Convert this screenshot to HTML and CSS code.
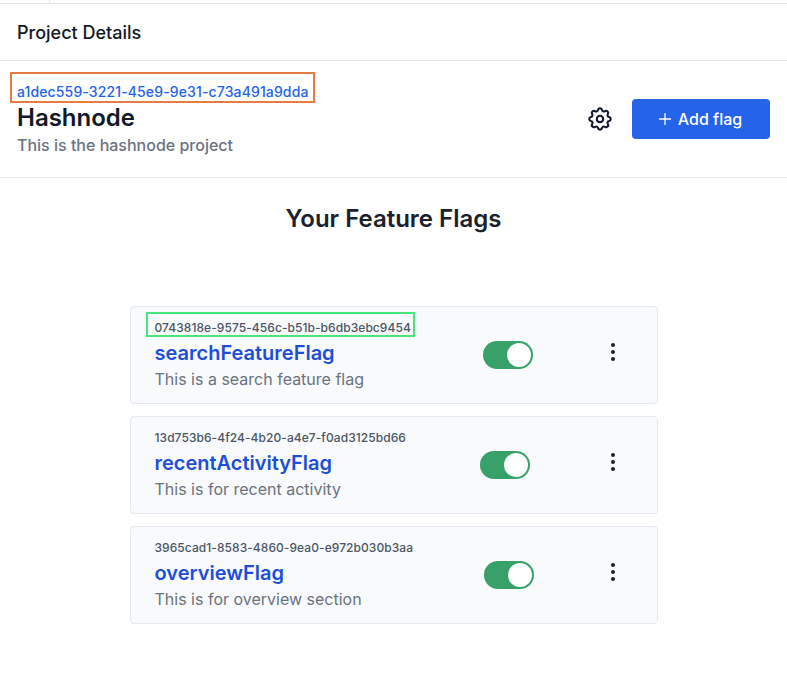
FILE: index.html
```html
<!DOCTYPE html>
<html lang="en">
<head>
<meta charset="utf-8">
<title>Project Details</title>
<link rel="stylesheet" href="styles.css">
</head>
<body>
<div class="topbar"><div class="topbar-cell"></div></div>
<header class="page-head">Project Details</header>
<section class="project">
  <div class="project-info">
    <div class="project-id">a1dec559-3221-45e9-9e31-c73a491a9dda</div>
    <h1 class="project-name">Hashnode</h1>
    <p class="project-desc">This is the hashnode project</p>
  </div>
  <div class="actions">
    <svg class="gear" viewBox="-12 -12 24 24" fill="none" stroke="currentColor" stroke-width="2.1" stroke-linejoin="round"><path d="M-2.01-9.08A2.05 2.05 0 0 1 2.01-9.08A1.9 1.9 0 0 0 5-7.84A2.05 2.05 0 0 1 7.84-5A1.9 1.9 0 0 0 9.08-2.01A2.05 2.05 0 0 1 9.08 2.01A1.9 1.9 0 0 0 7.84 5A2.05 2.05 0 0 1 5 7.84A1.9 1.9 0 0 0 2.01 9.08A2.05 2.05 0 0 1-2.01 9.08A1.9 1.9 0 0 0-5 7.84A2.05 2.05 0 0 1-7.84 5A1.9 1.9 0 0 0-9.08 2.01A2.05 2.05 0 0 1-9.08-2.01A1.9 1.9 0 0 0-7.84-5A2.05 2.05 0 0 1-5-7.84A1.9 1.9 0 0 0-2.01-9.08Z"/><circle r="3.2"/></svg>
    <button class="add"><svg class="plus" viewBox="0 0 12 12" stroke="currentColor" stroke-width="1.3"><path d="M6 0v12M0 6h12"/></svg>Add flag</button>
  </div>
</section>
<main class="flags">
  <h2 class="flags-title">Your Feature Flags</h2>
  <article class="card">
    <div class="card-text">
      <div class="flag-id highlighted">0743818e-9575-456c-b51b-b6db3ebc9454</div>
      <h3 class="flag-name">searchFeatureFlag</h3>
      <p class="flag-desc">This is a search feature flag</p>
    </div>
    <div class="toggle"><div class="knob"></div></div>
    <div class="menu"><i></i><i></i><i></i></div>
  </article>
  <article class="card">
    <div class="card-text">
      <div class="flag-id">13d753b6-4f24-4b20-a4e7-f0ad3125bd66</div>
      <h3 class="flag-name">recentActivityFlag</h3>
      <p class="flag-desc">This is for recent activity</p>
    </div>
    <div class="toggle"><div class="knob"></div></div>
    <div class="menu"><i></i><i></i><i></i></div>
  </article>
  <article class="card">
    <div class="card-text">
      <div class="flag-id">3965cad1-8583-4860-9ea0-e972b030b3aa</div>
      <h3 class="flag-name">overviewFlag</h3>
      <p class="flag-desc">This is for overview section</p>
    </div>
    <div class="toggle"><div class="knob"></div></div>
    <div class="menu"><i></i><i></i><i></i></div>
  </article>
</main>
</body>
</html>
```
FILE: styles.css
```css
* { box-sizing: border-box; }
body { margin: 0; background: #fff; color: #111827; font-family: Inter, "Liberation Sans", sans-serif; font-size: 16px; line-height: 24px; }
h1, h2, h3, p { margin: 0; }
.topbar { height: 4px; border-bottom: 1px solid #e5e7eb; }
.topbar-cell { width: 50px; height: 3px; border-right: 1px solid #e5e7eb; }
.page-head { height: 57px; padding: 15px 17px; border-bottom: 1px solid #e5e7eb; font-size: 18px; line-height: 28px; font-weight: 500; }
.project { height: 117px; padding: 0 17px; border-bottom: 1px solid #e5e7eb; display: flex; justify-content: space-between; align-items: center; }
.project-info { padding-top: 1px; }
.project-id { position: relative; width: max-content; font-size: 14px; line-height: 20px; letter-spacing: .13px; font-weight: 500; color: #2563eb; }
.project-id::after { content: ""; position: absolute; inset: -10px -6px -1px -7px; border: 2px solid #e67c45; }
.project-name { font-size: 24px; line-height: 32px; font-weight: 600; }
.project-desc { margin-top: -1px; font-weight: 500; color: #6b7280; }
.actions { display: flex; align-items: center; gap: 20px; }
.gear { width: 24px; height: 24px; }
.add { width: 138px; height: 40px; border: 0; border-radius: 4px; background: #2563eb; color: #fff; font: 500 16px/24px Inter, sans-serif; display: flex; align-items: center; justify-content: center; gap: 7px; padding: 0 1px 0 0; }
.plus { width: 12px; height: 12px; }
.flags { width: 528px; margin: 25px auto 0; }
.flags-title { margin-bottom: 71px; text-align: center; font-size: 24px; line-height: 32px; font-weight: 600; color: #1a202c; }
.card { height: 98px; margin-bottom: 12px; padding: 0 35.5px 0 24px; border: 1px solid #e2e8f0; border-radius: 4px; background: #f8fafc; display: flex; align-items: center; justify-content: space-between; }
.card-text { padding-top: 1px; }
.flag-id { position: relative; width: max-content; font-size: 12px; line-height: 16px; letter-spacing: .065px; font-weight: 500; color: #4b5563; }
.highlighted::after { content: ""; position: absolute; inset: -8px -4px -1px -8.6px; border: 2px solid #48e57b; }
.flag-name { margin: 3px 0 0; font-size: 20px; line-height: 28px; font-weight: 600; color: #1d4ed8; }
.flag-desc { color: #6b7280; line-height: 24px; }
.toggle { width: 50px; height: 28px; padding: 2px; border-radius: 14px; background: #38a169; display: flex; justify-content: flex-end; }
.knob { width: 24px; height: 24px; border-radius: 50%; background: #fff; }
.menu { width: 16px; padding-bottom: 6px; display: flex; flex-direction: column; align-items: center; gap: 3px; }
.menu i { width: 4px; height: 4px; border-radius: 50%; background: #1a202c; }
```
